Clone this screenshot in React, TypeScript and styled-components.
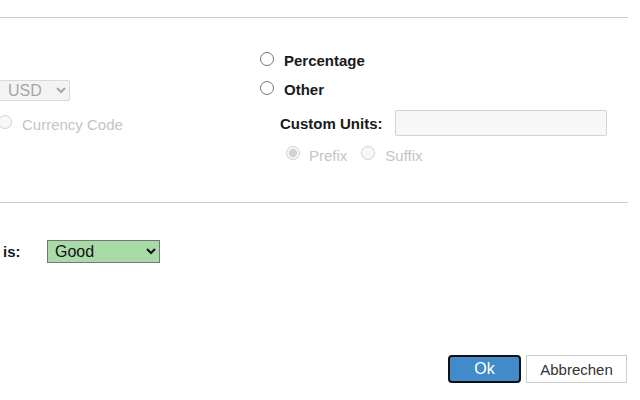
import React from "react";
import styled, { createGlobalStyle } from "styled-components";

const GlobalStyle = createGlobalStyle`
  html, body {
    margin: 0;
    padding: 0;
    background: #ffffff;
    overflow: hidden;
  }
  body {
    font-family: "Liberation Sans", Arial, sans-serif;
    color: #222;
  }
`;

const Dialog = styled.div`
  width: 628px;
  height: 400px;
  display: flex;
  flex-direction: column;
  box-sizing: border-box;
`;

const TopRule = styled.div`
  height: 17px;
  border-bottom: 1px solid #cccccc;
`;

const UnitsSection = styled.div`
  display: flex;
  height: 184px;
  margin-left: -2px;
`;

const LeftColumn = styled.div`
  width: 262px;
  padding-top: 62px;
  display: flex;
  flex-direction: column;
  align-items: flex-start;
`;

const RightColumn = styled.div`
  padding-top: 26px;
  display: flex;
  flex-direction: column;
`;

const CurrencySelect = styled.select`
  width: 71px;
  height: 21px;
  font-family: "Liberation Sans", Arial, sans-serif;
  font-size: 16px;
  padding: 0 0 0 4px;
  margin: 0 0 0 1px;
  border-radius: 2px;
`;

const RadioRow = styled.label<{ $indent?: number; $height?: number; $disabled?: boolean }>`
  display: flex;
  align-items: center;
  height: ${(p) => p.$height ?? 29}px;
  padding-left: ${(p) => p.$indent ?? 0}px;
  font-size: 15px;
  color: ${(p) => (p.$disabled ? "#c4c4c4" : "#1a1a1a")};
`;

const Radio = styled.input.attrs({ type: "radio" })<{ $gap?: number }>`
  width: 14px;
  height: 14px;
  margin: 0 ${(p) => p.$gap ?? 9}px 0 0;
  flex: none;
`;

const OptionText = styled.span<{ $bold?: boolean; $after?: number }>`
  font-weight: ${(p) => (p.$bold ? 700 : 400)};
  padding-top: 4px;
  margin-right: ${(p) => p.$after ?? 0}px;
`;

const CurrencyRow = styled(RadioRow)`
  margin-top: 7px;
  height: 28px;
`;

const CustomRow = styled.div`
  display: flex;
  align-items: center;
  height: 35px;
  padding: 7px 0 0 20px;
  box-sizing: border-box;
  gap: 12px;
`;

const FieldLabel = styled.span`
  font-size: 15px;
  font-weight: 700;
  color: #1a1a1a;
  padding-top: 1px;
`;

const UnitsInput = styled.input`
  width: 212px;
  height: 26px;
  box-sizing: border-box;
  border: 1px solid #d3d3d3;
  border-radius: 2px;
  background: #f7f7f7;
  font-family: "Liberation Sans", Arial, sans-serif;
  font-size: 15px;
`;

const StatusSection = styled.div`
  border-top: 1px solid #cccccc;
  padding-top: 37px;
  display: flex;
  flex-direction: column;
  flex: 1;
`;

const StatusRow = styled.div`
  display: flex;
  align-items: center;
  height: 23px;
`;

const StatusLabel = styled.span`
  width: 44px;
  padding-left: 3px;
  font-size: 15px;
  font-weight: 700;
  color: #1a1a1a;
`;

const StatusSelect = styled.select`
  width: 113px;
  height: 23px;
  background: #a8dba8;
  border: 1px solid #767676;
  border-radius: 0;
  color: #111;
  font-family: "Liberation Sans", Arial, sans-serif;
  font-size: 16px;
  padding: 0 0 0 3px;
  margin: 0;
`;

const Footer = styled.div`
  margin-top: auto;
  display: flex;
  justify-content: flex-end;
  gap: 5px;
  padding: 0 1px 17px 0;
`;

const Button = styled.button<{ $primary?: boolean }>`
  height: 28px;
  box-sizing: border-box;
  font-family: "Liberation Sans", Arial, sans-serif;
  cursor: pointer;
  ${(p) =>
    p.$primary
      ? `
    width: 73px;
    background: #428bca;
    color: #ffffff;
    border: 2px solid #111111;
    border-radius: 4px;
    font-size: 16px;
  `
      : `
    width: 101px;
    background: #ffffff;
    color: #333333;
    border: 1px solid #cccccc;
    border-radius: 0;
    font-size: 15px;
  `}
`;

export default function App() {
  return (
    <>
      <GlobalStyle />
      <Dialog>
        <TopRule />
        <UnitsSection>
          <LeftColumn>
            <CurrencySelect disabled defaultValue="USD">
              <option value="USD">USD</option>
            </CurrencySelect>
            <CurrencyRow $disabled>
              <Radio name="cur" disabled $gap={10} />
              <OptionText>Currency Code</OptionText>
            </CurrencyRow>
          </LeftColumn>
          <RightColumn>
            <RadioRow>
              <Radio name="unit" $gap={10} />
              <OptionText $bold>Percentage</OptionText>
            </RadioRow>
            <RadioRow>
              <Radio name="unit" $gap={10} />
              <OptionText $bold>Other</OptionText>
            </RadioRow>
            <CustomRow>
              <FieldLabel>Custom Units:</FieldLabel>
              <UnitsInput disabled />
            </CustomRow>
            <RadioRow $indent={26} $height={32} $disabled>
              <Radio name="pos" disabled defaultChecked $gap={9} />
              <OptionText $after={14}>Prefix</OptionText>
              <Radio name="pos" disabled $gap={10} />
              <OptionText>Suffix</OptionText>
            </RadioRow>
          </RightColumn>
        </UnitsSection>
        <StatusSection>
          <StatusRow>
            <StatusLabel>is:</StatusLabel>
            <StatusSelect defaultValue="good">
              <option value="good">Good</option>
              <option value="warning">Warning</option>
              <option value="critical">Critical</option>
            </StatusSelect>
          </StatusRow>
          <Footer>
            <Button $primary>Ok</Button>
            <Button>Abbrechen</Button>
          </Footer>
        </StatusSection>
      </Dialog>
    </>
  );
}
